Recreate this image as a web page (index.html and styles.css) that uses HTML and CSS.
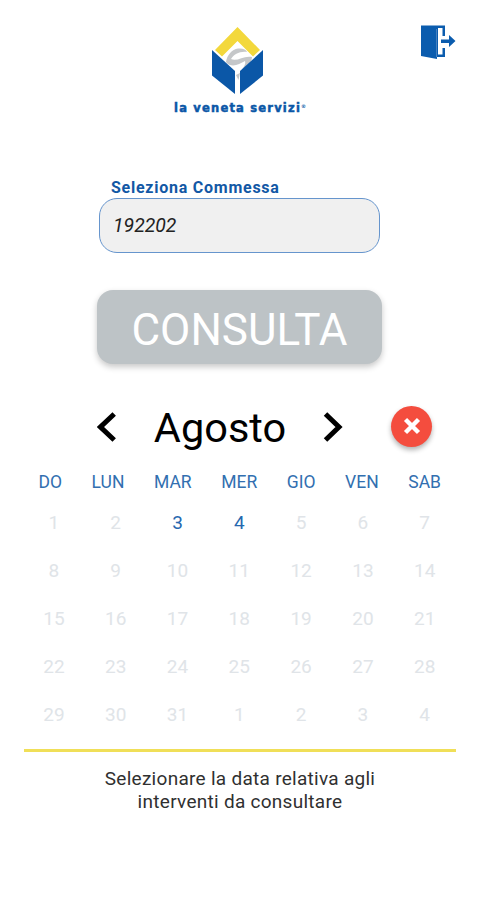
FILE: index.html
```html
<!DOCTYPE html>
<html lang="it">
<head>
<meta charset="utf-8">
<title>La Veneta Servizi</title>
<link rel="stylesheet" href="styles.css">
</head>
<body>
<main class="screen">
  <header class="header">
    <div class="brand">
      <svg class="brand-mark" width="56" height="70" viewBox="0 0 56 70">
        <path d="M16 36C17 29 22 23.500 28 22.500C33 22 36 23.500 37 26C30 25 24 28 21 33C27 36 34 29 42 31C42 37 36 43 29 48C34 41 36 38 35 35C29 38 22 43 16 36Z" fill="#c5c7c9"/>
        <path d="M26 49L30 47L28.500 54Z" fill="#c5c7c9"/>
        <path d="M27.500 1L50 24L43 30.500L27.500 15L12 30.500L5 24Z" fill="#f3d83c"/>
        <path d="M2 24L25 45V68L2 49.500Z" fill="#0b57a7"/>
        <path d="M53 24L30 45V68L53 49.500Z" fill="#0b57a7"/>
      </svg>
      <span class="brand-name">la veneta servizi<span class="reg">®</span></span>
    </div>
    <button class="logout" aria-label="Esci">
      <svg width="36" height="36" viewBox="0 0 36 36">
        <path d="M1 1.500H25V12H22.500V4H18V30.500H22.500V24H25V33H17V35L1 32Z" fill="#0b5cae"/>
        <path d="M16.500 5V33" stroke="#4580c0" stroke-width="1"/>
        <path d="M21 15.500H29V11L35.500 17L29 23V19H21Z" fill="#0b5cae"/>
      </svg>
    </button>
  </header>

  <label class="field">
    <span class="field-label">Seleziona Commessa</span>
    <input class="field-input" type="text" value="192202">
  </label>

  <button class="submit">CONSULTA</button>

  <div class="month">
    <button class="prev" aria-label="Mese precedente">
      <svg width="20" height="30" viewBox="0 0 20 30"><path d="M17.200 2L3.500 15L17.200 28" fill="none" stroke="#000" stroke-width="5"/></svg>
    </button>
    <h1 class="month-name">Agosto</h1>
    <button class="next" aria-label="Mese successivo">
      <svg width="20" height="30" viewBox="0 0 20 30"><path d="M2.500 2L16 15L2.500 28" fill="none" stroke="#000" stroke-width="5"/></svg>
    </button>
    <button class="clear" aria-label="Annulla">
      <svg width="18" height="18" viewBox="0 0 18 18"><path d="M2.500 2.500L15.500 15.500M15.500 2.500L2.500 15.500" stroke="#fff" stroke-width="4.400"/></svg>
    </button>
  </div>

  <div class="weekdays">
    <span>DO</span><span>LUN</span><span>MAR</span><span>MER</span><span>GIO</span><span>VEN</span><span>SAB</span>
  </div>
  <div class="days">
    <span>1</span><span>2</span><span class="active">3</span><span class="active">4</span><span>5</span><span>6</span><span>7</span>
    <span>8</span><span>9</span><span>10</span><span>11</span><span>12</span><span>13</span><span>14</span>
    <span>15</span><span>16</span><span>17</span><span>18</span><span>19</span><span>20</span><span>21</span>
    <span>22</span><span>23</span><span>24</span><span>25</span><span>26</span><span>27</span><span>28</span>
    <span>29</span><span>30</span><span>31</span><span>1</span><span>2</span><span>3</span><span>4</span>
  </div>

  <p class="hint">Selezionare la data relativa agli<br>interventi da consultare</p>
</main>
</body>
</html>
```

FILE: styles.css
```css
* { box-sizing: border-box; }
body { margin: 0; background: #fff; font-family: Roboto, "Liberation Sans", sans-serif; }
button { padding: 0; border: 0; background: none; font: inherit; }
svg { display: block; }
.screen { width: 478px; height: 900px; overflow: hidden; background: #fff; }

.header {
  display: grid;
  grid-template-columns: 152px 134px 1fr;
  height: 177px;
  padding: 24px 22px 0 22px;
}
.brand {
  grid-column: 2;
  display: flex;
  flex-direction: column;
  align-items: flex-start;
}
.brand-mark { margin: 2px 0 0 36px; }
.brand-name {
  margin-top: 2px;
  color: #0b57a7;
  font: 700 11.5px/16px "DejaVu Sans", sans-serif;
  letter-spacing: 1.2px;
  -webkit-text-stroke: .5px #0b57a7;
  white-space: nowrap;
}
.reg { font-size: 5px; vertical-align: 4px; letter-spacing: 0; -webkit-text-stroke: 0; }
.logout { justify-self: end; align-self: start; }

.field { display: block; width: 281px; margin-left: 99px; }
.field-label {
  display: block;
  height: 21px;
  padding-left: 12px;
  color: #1258a5;
  font-size: 16px;
  font-weight: 700;
  line-height: 21px;
  letter-spacing: .75px;
}
.field-input {
  display: block;
  width: 281px;
  height: 55px;
  padding: 0 13px;
  border: 1.5px solid #6695cd;
  border-radius: 18px;
  background: #f0f0f0;
  color: #222;
  font: italic 400 19.4px Roboto, sans-serif;
}

.submit {
  display: block;
  width: 285px;
  height: 74px;
  margin: 37px 0 0 97px;
  padding-top: 6px;
  border-radius: 16px;
  background: #bdc3c6;
  box-shadow: 0 3px 6px rgba(0, 0, 0, .22);
  color: #fff;
  font-size: 44px;
  line-height: 68px;
}

.month {
  display: grid;
  grid-template-columns: 20px 166px 20px 41px;
  column-gap: 20px;
  align-items: center;
  height: 50px;
  margin: 38px 0 0 97px;
}
.month-name {
  margin: 0;
  padding-top: 2px;
  font-size: 41.5px;
  font-weight: 400;
  line-height: 46px;
  text-align: center;
}
.prev, .next { margin-top: -1px; }
.clear {
  display: grid;
  place-items: center;
  width: 41px;
  height: 41px;
  margin: -2px 0 0 28px;
  border-radius: 50%;
  background: #f44d3e;
  box-shadow: 0 3px 5px rgba(0, 0, 0, .3);
}

.weekdays {
  display: flex;
  justify-content: space-between;
  margin-top: 19px;
  padding: 0 37px 0 38.5px;
  color: #326fb0;
  font-size: 17.5px;
  line-height: 22px;
}
.days {
  display: grid;
  grid-template-columns: repeat(7, 61.8px);
  grid-auto-rows: 47.8px;
  align-items: center;
  margin: 6px 0 0 23px;
  color: #e0e4e8;
  font-size: 19px;
  text-align: center;
}
.active { color: #2668af; }

.hint {
  width: 432px;
  margin: 11px 0 0 24px;
  padding-top: 15px;
  border-top: 3px solid #f0df58;
  color: #303030;
  font-size: 19px;
  line-height: 23.5px;
  letter-spacing: .28px;
  text-align: center;
}
```
